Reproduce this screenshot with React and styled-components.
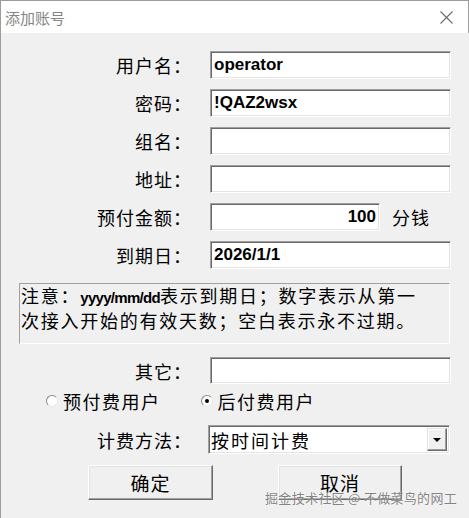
import React from 'react';
import styled, { createGlobalStyle } from 'styled-components';

const GlobalStyle = createGlobalStyle`
	html, body {
		margin: 0;
		padding: 0;
		background: #f0f0f0;
	}
	* {
		box-sizing: border-box;
	}
`;

const cjk = `'Noto Sans CJK SC', 'Noto Sans', sans-serif`;

const Window = styled.div`
	position: relative;
	width: 469px;
	height: 518px;
	border-left: 1px solid #9c9c9c;
	border-top: 1px solid #9c9c9c;
	background: #f0f0f0;
	font-family: ${cjk};
	color: #000;
	overflow: hidden;
	display: flex;
	flex-direction: column;
`;

const TitleBar = styled.div`
	height: 32px;
	flex: none;
	background: #fff;
	border-right: 1px solid #9c9c9c;
	display: flex;
	align-items: center;
	justify-content: space-between;
	padding: 0 15px 0 4px;

	& > span {
		font-size: 15px;
		color: #858585;
		line-height: 1;
	}
`;

const Body = styled.div`
	flex: 1;
	padding-top: 18px;
	display: flex;
	flex-direction: column;
`;

const FieldList = styled.div`
	display: flex;
	flex-direction: column;
	gap: ${(p) => p.$gap || 10}px;
	margin-top: ${(p) => p.$top || 0}px;
`;

const Row = styled.div`
	display: grid;
	grid-template-columns: 191px 241px;
	column-gap: 18px;
	align-items: center;
	height: ${(p) => p.$h || 28}px;
`;

const Label = styled.label`
	text-align: right;
	font-size: 18px;
	letter-spacing: 1px;
	line-height: 1;
	white-space: nowrap;
`;

const Field = styled.input`
	width: ${(p) => p.$w || 241}px;
	height: ${(p) => p.$h || 28}px;
	margin: 0;
	padding: 0 ${(p) => (p.$right ? 3 : 2)}px 0 3px;
	background: #fff;
	border: 1px solid;
	border-color: #a0a0a0 #fff #fff #a0a0a0;
	box-shadow: inset 1px 1px #696969, inset -1px -1px #e3e3e3;
	border-radius: 0;
	outline: none;
	font-family: 'Liberation Sans', Arial, sans-serif;
	font-weight: bold;
	font-size: 17px;
	color: #000;
	text-align: ${(p) => (p.$right ? 'right' : 'left')};
`;

const Inline = styled.div`
	display: flex;
	align-items: center;
	gap: 12px;

	& > span {
		font-size: 18px;
		letter-spacing: 1px;
		line-height: 1;
	}
`;

const Note = styled.div`
	margin: 14px 19px 0 18px;
	height: 61px;
	border: 1px solid;
	border-color: #a0a0a0 #fff #fff #a0a0a0;
	padding: 0 1px;
	font-size: 18px;
	letter-spacing: 1.75px;
	line-height: 22px;
	white-space: nowrap;

	& > b {
		font-family: 'Liberation Sans', Arial, sans-serif;
		font-size: 15px;
		letter-spacing: -0.7px;
	}
`;

const RadioRow = styled.div`
	display: flex;
	align-items: center;
	height: 20px;
	margin-top: 7px;
	padding-left: 45px;
	gap: 40px;
`;

const RadioItem = styled.label`
	display: flex;
	align-items: center;
	gap: 5px;
	font-size: 18px;
	letter-spacing: 1.5px;
	line-height: 1;
`;

const RadioDot = styled.span`
	width: 12px;
	height: 12px;
	border-radius: 50%;
	background: #fff;
	border: 1px solid;
	border-color: #8a8a8a #e8e8e8 #e8e8e8 #8a8a8a;
	display: flex;
	align-items: center;
	justify-content: center;

	&::after {
		content: '';
		width: 4px;
		height: 4px;
		border-radius: 50%;
		background: ${(p) => (p.$checked ? '#000' : 'transparent')};
	}
`;

const Combo = styled.div`
	width: 242px;
	height: 29px;
	margin-left: -2px;
	background: #fff;
	border: 1px solid;
	border-color: #a0a0a0 #fff #fff #a0a0a0;
	box-shadow: inset 1px 1px #696969, inset -1px -1px #e3e3e3;
	display: flex;
	align-items: center;
	padding: 2px 2px 2px 2px;

	& > span {
		flex: 1;
		font-size: 18px;
		letter-spacing: 2px;
		line-height: 1;
	}
`;

const ComboButton = styled.div`
	width: 20px;
	height: 23px;
	background: #f0f0f0;
	border: 1px solid;
	border-color: #e3e3e3 #696969 #696969 #e3e3e3;
	box-shadow: inset -1px -1px #a0a0a0, inset 1px 1px #fff;
	display: flex;
	align-items: center;
	justify-content: center;

	&::after {
		content: '';
		border-left: 4px solid transparent;
		border-right: 4px solid transparent;
		border-top: 4px solid #000;
	}
`;

const ButtonRow = styled.div`
	display: flex;
	gap: 65px;
	padding-left: 87px;
	margin-top: 11px;
`;

const Button = styled.button`
	width: ${(p) => p.$w || 125}px;
	height: 35px;
	margin: 0;
	padding: 0;
	background: #f0f0f0;
	border: 1px solid;
	border-color: #fff #696969 #696969 #fff;
	box-shadow: inset -1px -1px #a0a0a0, inset 1px 1px #e3e3e3;
	border-radius: 0;
	font-family: ${cjk};
	font-size: 19px;
	letter-spacing: 1px;
	color: #000;
	line-height: 1;
`;

const Watermark = styled.div`
	position: absolute;
	right: 12px;
	bottom: 12px;
	font-size: 13px;
	line-height: 16px;
	color: rgba(110, 110, 110, 0.85);
	letter-spacing: 0.3px;
	text-shadow: 0 0 2px rgba(255, 255, 255, 0.9);
	white-space: nowrap;
`;

const fields = [
	{ label: '用户名：', value: 'operator' },
	{ label: '密码：', value: '!QAZ2wsx' },
	{ label: '组名：', value: '' },
	{ label: '地址：', value: '' },
];

const App = () => {
	return (
		<>
			<GlobalStyle />
			<Window>
				<TitleBar>
					<span>添加账号</span>
					<svg width='13' height='13' viewBox='0 0 13 13'>
						<path d='M0.5 0.5 L12.5 12.5 M12.5 0.5 L0.5 12.5' stroke='#6b6b6b' strokeWidth='1.1' fill='none' />
					</svg>
				</TitleBar>
				<Body>
					<FieldList>
						{fields.map((f) => (
							<Row key={f.label}>
								<Label>{f.label}</Label>
								<Field readOnly defaultValue={f.value} />
							</Row>
						))}
						<Row>
							<Label>预付金额：</Label>
							<Inline>
								<Field readOnly $w={170} $right defaultValue='100' />
								<span>分钱</span>
							</Inline>
						</Row>
						<Row>
							<Label>到期日：</Label>
							<Field readOnly defaultValue='2026/1/1' />
						</Row>
					</FieldList>

					<Note>
						注意：<b>yyyy/mm/dd</b>表示到期日；数字表示从第一
						<br />
						次接入开始的有效天数；空白表示永不过期。
					</Note>

					<FieldList $top={13}>
						<Row $h={27}>
							<Label>其它：</Label>
							<Field readOnly $h={27} defaultValue='' />
						</Row>
					</FieldList>

					<RadioRow>
						<RadioItem>
							<RadioDot />
							预付费用户
						</RadioItem>
						<RadioItem>
							<RadioDot $checked />
							后付费用户
						</RadioItem>
					</RadioRow>

					<FieldList $top={14}>
						<Row $h={29}>
							<Label>计费方法：</Label>
							<Combo>
								<span>按时间计费</span>
								<ComboButton />
							</Combo>
						</Row>
					</FieldList>

					<ButtonRow>
						<Button>确定</Button>
						<Button $w={124}>取消</Button>
					</ButtonRow>
				</Body>
				<Watermark>掘金技术社区 @ 不做菜鸟的网工</Watermark>
			</Window>
		</>
	);
};

export default App;
